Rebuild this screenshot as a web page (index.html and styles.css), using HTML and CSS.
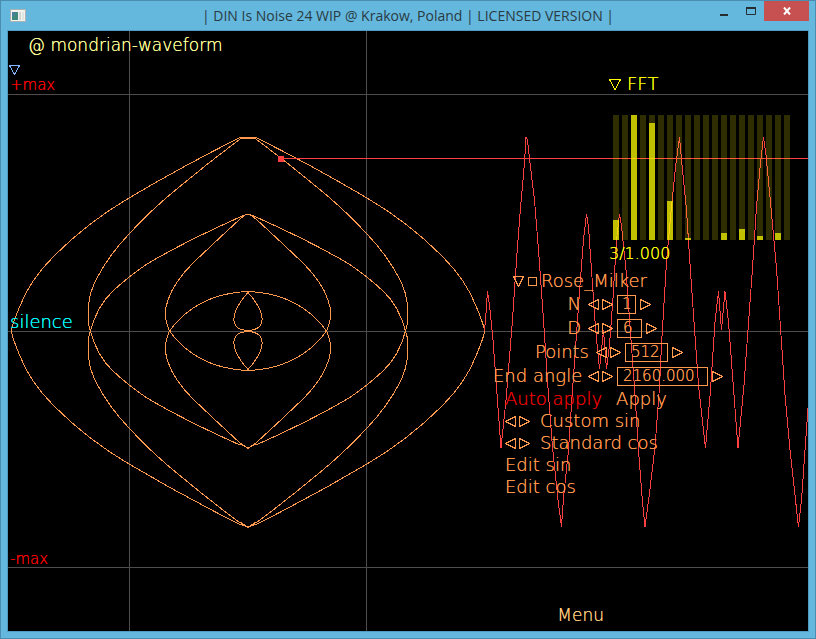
FILE: index.html
```html
<!DOCTYPE html>
<html lang="en">
<head>
<meta charset="utf-8">
<title>DIN Is Noise 24 WIP</title>
<link rel="stylesheet" href="styles.css">
</head>
<body>
<div class="window">
  <header class="titlebar">
    <svg class="app-icon" width="16" height="14" viewBox="0 0 16 14">
      <rect x="0.5" y="0.5" width="15" height="12" fill="#f4f2ee" stroke="#a9b3b5"/>
      <rect x="2" y="3" width="6" height="8" fill="#3f8a7c"/>
      <rect x="2" y="3" width="3" height="4" fill="#4b7f9d"/>
      <rect x="9" y="3" width="2" height="8" fill="#d3d8d6"/>
      <rect x="12" y="3" width="2" height="8" fill="#dfe6e2"/>
    </svg>
    <h1 class="title">| DIN Is Noise 24 WIP @ Krakow, Poland | LICENSED VERSION |</h1>
    <div class="window-buttons">
      <button class="win-btn" aria-label="Minimize"><svg width="10" height="12" viewBox="0 0 10 12"><path d="M1 10h8" stroke="#262d31" stroke-width="2"/></svg></button>
      <button class="win-btn" aria-label="Maximize"><svg width="10" height="12" viewBox="0 0 10 12"><path d="M0.5 3v6.5h9V3M0 3h10" fill="none" stroke="#262d31"/><path d="M0 3h10" stroke="#262d31" stroke-width="2"/></svg></button>
      <button class="win-btn win-close" aria-label="Close"><svg width="8" height="8" viewBox="0 0 8 8"><path d="M1 0.5l6 7M7 0.5l-6 7" stroke="#fff" stroke-width="2"/></svg></button>
    </div>
  </header>

  <main class="canvas">
    <svg class="plot" viewBox="8 31 800 600" preserveAspectRatio="none" aria-hidden="true">
      <g class="grid">
        <path d="M8 94.500H808M8 331.500H808M8 567.500H808M129.500 31V631M366.500 31V631"/>
      </g>
      <defs>
        <g id="quarter">
          <path d="M240 137.500Q183 166 129 198Q88 222 54 256Q30 280 20 306Q12 325 11.500 331"/>
          <path d="M240 139Q208 163 178 188Q152 209 129 234Q109 255 97 278Q89 293 88.500 307Q87 322 90.500 331"/>
          <path d="M240 217Q184 242 147 264Q129 276 113 291Q97 306 90.500 331"/>
          <path d="M240 219Q216 241 193 263Q174 282 168 300Q164 311 166 320Q167 326 169.500 331"/>
          <path d="M248.500 291.500Q230 292 213 298Q186 308 169.500 331"/>
          <path d="M248.500 292Q240 301 235.500 311Q232 321 236 326Q240 330.500 248.500 330.500"/>
        </g>
        <g id="half">
          <use href="#quarter"/>
          <use href="#quarter" transform="translate(0 662) scale(1 -1)"/>
          <path d="M240 137.500H249M240 139L244 138.500H249M240 217L246 214.500M240 219L246 214.500H249"/>
          <path d="M240 524L248.500 527.500M240 522L248.500 527.500M240 444L248.500 448.500M240 443L248.500 448.500"/>
        </g>
      </defs>
      <g class="rose">
        <use href="#half"/>
        <use href="#half" transform="translate(496 0) scale(-1 1)"/>
      </g>
      <g class="wave">
        <path d="M281 158.500H808"/>
        <polyline points="484.500,331 485.500,320 487.500,291.500 489.500,305 493,340 501,448 506,400 512.500,320 517,253 520.500,208 524.500,163 526,137 527.500,140 530,163 534.500,200 538.500,250 543.500,320 548.500,395 552.500,447 558,500 561.500,527 563.500,498 568.500,450 572.500,390 580,285 583.500,240 586.500,214 588.500,227 591.500,270 595.500,328 599.500,369 603.500,330 606.500,369 609.500,345 613,298 616.500,240 619.500,214 621.500,226 626,270 635,395 638.500,450 642,496 645,527 649.500,493 655,447 659.500,387 661.500,345 666.500,262 671.500,207 675.500,167 679.500,137 681.500,160 686.500,210 690.500,272 698.500,385 705.500,448 710.500,390 715,322 718.500,291.500 721.500,330 725,291.500 728.500,322 738,448 744,385 752.500,268 756.500,207 760.500,163 763.500,137 766,155 771.500,213 776.500,268 785,395 790,450 798.500,527 801.500,500 808,408"/>
        <rect x="278" y="156" width="6" height="6"/>
      </g>
    </svg>

    <p class="label editor-name">@ mondrian-waveform</p>
    <button class="label fold-toggle" aria-label="Fold"><svg width="11" height="10" viewBox="0 0 11 10"><path d="M.5 .5h10L5.500 9.500z"/></svg></button>
    <p class="label limit limit-top">+max</p>
    <p class="label limit-mid">silence</p>
    <p class="label limit limit-bottom">-max</p>

    <section class="fft">
      <button class="fft-title"><svg width="12" height="11" viewBox="0 0 12 11"><path d="M.5 .5h11L6 10.500z"/></svg>FFT</button>
      <ul class="bars">
        <li><i style="height:16%"></i></li><li></li>
        <li><i style="height:100%"></i></li><li></li>
        <li><i style="height:94%"></i></li><li></li>
        <li><i style="height:31%"></i></li><li></li>
        <li><i style="height:2%"></i></li><li></li>
        <li></li><li></li>
        <li><i style="height:6%"></i></li><li></li>
        <li><i style="height:9%"></i></li><li></li>
        <li><i style="height:3%"></i></li><li></li>
        <li><i style="height:6%"></i></li><li></li>
      </ul>
      <p class="fft-value">3/1.000</p>
    </section>

    <section class="panel">
      <div class="panel-title">
        <button aria-label="Collapse"><svg width="11" height="11" viewBox="0 0 11 11"><path d="M.5 .5h10L5.500 10.500z"/></svg></button>
        <button aria-label="Detach"><svg width="9" height="9" viewBox="0 0 9 9"><path d="M.5 .5h8v8h-8z"/></svg></button>
        <span>Rose_Milker</span>
      </div>
      <div class="param">
        <label for="n">N</label>
        <span class="pair"><button aria-label="Less N"><svg width="11" height="11" viewBox="0 0 11 11"><path d="M10.500 .5v10L.5 5.500z"/></svg></button><button aria-label="More N"><svg width="11" height="11" viewBox="0 0 11 11"><path d="M.5 .5v10L10.500 5.500z"/></svg></button></span>
        <input id="n" class="w-one" value="1">
        <button aria-label="N options"><svg width="11" height="11" viewBox="0 0 11 11"><path d="M.5 .5v10L10.500 5.500z"/></svg></button>
      </div>
      <div class="param">
        <label for="d">D</label>
        <span class="pair"><button aria-label="Less D"><svg width="11" height="11" viewBox="0 0 11 11"><path d="M10.500 .5v10L.5 5.500z"/></svg></button><button aria-label="More D"><svg width="11" height="11" viewBox="0 0 11 11"><path d="M.5 .5v10L10.500 5.500z"/></svg></button></span>
        <input id="d" class="w-two" value="6">
        <button aria-label="D options"><svg width="11" height="11" viewBox="0 0 11 11"><path d="M.5 .5v10L10.500 5.500z"/></svg></button>
      </div>
      <div class="param param-inset">
        <label for="points">Points</label>
        <span class="pair"><button aria-label="Fewer points"><svg width="11" height="11" viewBox="0 0 11 11"><path d="M10.500 .5v10L.5 5.500z"/></svg></button><button aria-label="More points"><svg width="11" height="11" viewBox="0 0 11 11"><path d="M.5 .5v10L10.500 5.500z"/></svg></button></span>
        <input id="points" class="w-three" value="512">
        <button aria-label="Points options"><svg width="11" height="11" viewBox="0 0 11 11"><path d="M.5 .5v10L10.500 5.500z"/></svg></button>
      </div>
      <div class="param">
        <label for="angle">End angle</label>
        <span class="pair"><button aria-label="Smaller angle"><svg width="11" height="11" viewBox="0 0 11 11"><path d="M10.500 .5v10L.5 5.500z"/></svg></button><button aria-label="Larger angle"><svg width="11" height="11" viewBox="0 0 11 11"><path d="M.5 .5v10L10.500 5.500z"/></svg></button></span>
        <input id="angle" class="w-wide" value="2160.000">
        <button aria-label="Angle options"><svg width="11" height="11" viewBox="0 0 11 11"><path d="M.5 .5v10L10.500 5.500z"/></svg></button>
      </div>
      <div class="actions">
        <div class="action apply"><button class="off">Auto apply</button><button>Apply</button></div>
        <div class="action">
          <span class="pair"><button aria-label="Previous sin"><svg width="11" height="11" viewBox="0 0 11 11"><path d="M10.500 .5v10L.5 5.500z"/></svg></button><button aria-label="Next sin"><svg width="11" height="11" viewBox="0 0 11 11"><path d="M.5 .5v10L10.500 5.500z"/></svg></button></span>
          <span>Custom sin</span>
        </div>
        <div class="action">
          <span class="pair"><button aria-label="Previous cos"><svg width="11" height="11" viewBox="0 0 11 11"><path d="M10.500 .5v10L.5 5.500z"/></svg></button><button aria-label="Next cos"><svg width="11" height="11" viewBox="0 0 11 11"><path d="M.5 .5v10L10.500 5.500z"/></svg></button></span>
          <span>Standard cos</span>
        </div>
        <div class="action"><button>Edit sin</button></div>
        <div class="action"><button>Edit cos</button></div>
      </div>
    </section>

    <button class="label menu">Menu</button>
  </main>
</div>
</body>
</html>
```
FILE: styles.css
```css
* { box-sizing: border-box; }

body { margin: 0; }

p, h1, ul { margin: 0; padding: 0; }

button {
  padding: 0;
  border: 0;
  background: none;
  color: inherit;
  font: inherit;
  text-shadow: inherit;
  white-space: nowrap;
}

svg { display: block; }

.window {
  display: flex;
  flex-direction: column;
  height: 100vh;
  padding: 0 7px 7px;
  border: 1px solid #4a8db0;
  background: #64b7dd;
}

.titlebar {
  display: grid;
  grid-template-columns: 108px 1fr 108px;
  flex: none;
  height: 30px;
}

.app-icon { margin: 8px 0 0 2px; }

.title {
  color: #2a3b43;
  font: 400 14px/29px "Open Sans", sans-serif;
  text-align: center;
  white-space: nowrap;
}

.window-buttons {
  display: flex;
  justify-content: flex-end;
  height: 20px;
  margin-right: -1px;
}

.win-btn {
  display: grid;
  place-items: center;
  width: 27px;
}

.win-close {
  width: 45px;
  background: #c75050;
}

.canvas {
  position: relative;
  flex: 1;
  min-height: 0;
  overflow: hidden;
  outline: 1px solid #4f9cc3;
  background: #000;
  color: #ff994d;
  font: 200 18px/22px "DejaVu Sans", sans-serif;
  text-shadow: 0 0 0 currentColor;
}

.plot {
  position: absolute;
  inset: 0;
  width: 100%;
  height: 100%;
  fill: none;
  shape-rendering: crispEdges;
}

.grid { stroke: #4d4d4d; }
.rose { stroke: #ff994d; }
.wave { stroke: #ff4040; }
.wave rect { fill: #ff4040; stroke: none; }

.canvas button svg {
  fill: none;
  stroke: currentColor;
  shape-rendering: crispEdges;
}

.label { position: absolute; white-space: nowrap; }

.editor-name { left: 20px; top: 3px; color: #ffff99; font-size: 17px; }
.fold-toggle { left: 1px; top: 34px; color: #80b3ff; }
.limit { left: 2px; color: #f00; font-size: 15px; }
.limit-top { top: 43px; }
.limit-mid { left: 2px; top: 280px; color: #0ff; }
.limit-bottom { bottom: 61px; }
.menu { right: 204px; bottom: 5px; color: #ffcc80; font-size: 17px; }

.fft {
  position: absolute;
  top: 42px;
  right: 18px;
  width: 181px;
  color: #ff0;
}

.fft-title {
  display: flex;
  align-items: center;
  gap: 6px;
}

.bars {
  display: flex;
  justify-content: space-between;
  height: 125px;
  margin: 20px 0 3px 4px;
  list-style: none;
}

.bars li {
  display: flex;
  align-items: flex-end;
  width: 6px;
  background: rgba(255, 255, 0, 0.18);
}

.bars i {
  width: 100%;
  background: rgba(255, 255, 0, 0.7);
}

.fft-value { font-size: 16px; }

.panel {
  position: absolute;
  top: 239px;
  right: 85px;
  width: 230px;
}

.panel-title {
  display: flex;
  align-items: center;
  gap: 4px;
  height: 22px;
  padding-left: 20px;
}

.param {
  display: flex;
  align-items: center;
  gap: 4px;
  height: 24px;
}

.param label {
  width: 88px;
  margin-right: 3px;
  text-align: right;
  white-space: nowrap;
}

.param-inset { padding-left: 8px; }

.pair { display: flex; gap: 3px; }

.param input {
  height: 19px;
  padding: 0 5px;
  border: 1px solid #ff994d;
  border-radius: 0;
  background: none;
  color: #ff994d;
  font: 200 15px/17px "DejaVu Sans", sans-serif;
  text-shadow: inherit;
}

.param .w-one { width: 19px; padding: 0 4px; }
.w-two { width: 25px; }
.w-three { width: 43px; }
.w-wide { width: 91px; }

.actions { padding-left: 12px; }

.action {
  display: flex;
  align-items: center;
  gap: 10px;
  height: 22px;
}

.apply { gap: 14px; }

.off { color: #e60000; }
```
